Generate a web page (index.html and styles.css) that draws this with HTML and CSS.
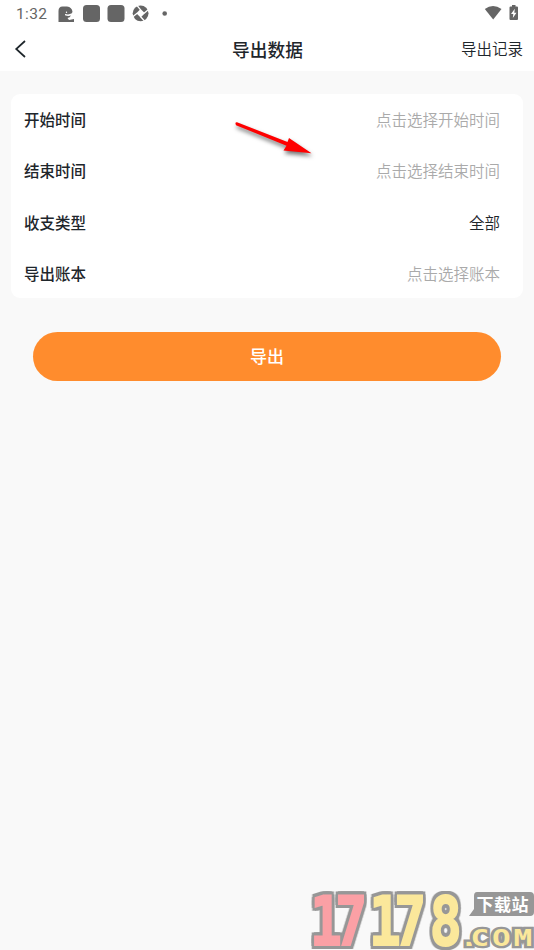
FILE: index.html
```html
<!DOCTYPE html>
<html lang="zh-CN">
<head>
<meta charset="utf-8">
<title>导出数据</title>
<link rel="stylesheet" href="styles.css">
</head>
<body>
<div class="screen">
  <header class="top">
    <div class="status">
      <span class="clock">1:32</span>
      <svg class="apps" width="112" height="20" viewBox="57 4 112 20" fill="#656565">
        <path d="M58.500 22V11Q58.500 6.500 62.500 6.500H67Q72 7 72.500 12L71.500 13.500L68 14.500L65 14V15.200Q68 16.500 71 15.500Q70 17.500 67.500 18L69 20L74 19V22Z"/>
        <circle cx="66.500" cy="12.300" r=".7" fill="#fff"/>
        <rect x="83" y="5" width="17" height="17" rx="3.500"/>
        <rect x="107.500" y="5" width="17" height="17" rx="3.500"/>
        <circle cx="140.600" cy="13.300" r="7.900"/>
        <path d="M140.600 9L144.900 13.300L140.600 17.600L136.300 13.300Z" fill="#fff"/>
        <path d="M140.600 9.800L137 5.500M144.100 13.300L148.500 9.500M140.600 16.800L144.500 21M137.100 13.300L132.500 17" stroke="#fff" stroke-width="1.300"/>
        <circle cx="164.700" cy="13.500" r="2.300"/>
      </svg>
      <svg class="radio" width="36" height="20" viewBox="484 3 36 20" fill="#656565">
        <path d="M484.800 9Q493 3 501.500 9L493.200 19.600Z"/>
        <path d="M512 5H515.500V6.500H517Q518 6.500 518 7.500V19Q518 20 517 20H510.500Q509.500 20 509.500 19V7.500Q509.500 6.500 510.500 6.500H512Z"/>
        <path d="M514.800 8.800L511 13.900H513.300L512.800 18L516.500 12.700H514.300Z" fill="#fff"/>
      </svg>
    </div>
    <nav class="nav">
      <svg class="back" width="14" height="20" viewBox="0 0 14 20"><path d="M11 2L2.200 10L11 18" fill="none" stroke="#1e262b" stroke-width="1.700"/></svg>
      <h1 class="title">导出数据</h1>
      <span class="records">导出记录</span>
    </nav>
  </header>
  <main class="content">
    <section class="card">
      <div class="row"><span class="label">开始时间</span><span class="hint">点击选择开始时间</span></div>
      <div class="row"><span class="label">结束时间</span><span class="hint">点击选择结束时间</span></div>
      <div class="row"><span class="label">收支类型</span><span class="value">全部</span></div>
      <div class="row"><span class="label">导出账本</span><span class="hint">点击选择账本</span></div>
    </section>
    <button class="submit">导出</button>
  </main>
  <svg class="arrow" width="100" height="60" viewBox="225 110 100 60">
    <path d="M237 122.200L287.500 142L289 138L311.500 153.300L283.500 150.500L286.500 145.800L236 125.300Q234.500 122 237 122.200Z" fill="#fe0000"/>
  </svg>
  <svg class="mark" width="226" height="64" viewBox="308 886 226 64">
    <g class="digits" transform="translate(310 945) scale(.78 1)">
      <text class="pink" x="0 32.500" y="0">17</text>
      <text class="yellow" x="75.500 108 153.500" y="0">178</text>
    </g>
    <path d="M477 892H530Q534 892 534 896V912Q534 916 530 916H469L474 909V896Q474 892 477 892Z" fill="#979797"/>
    <text class="site" x="476.500" y="911" textLength="52">下载站</text>
    <g class="domain" transform="translate(463 946) scale(1.350 1)">
      <text x="-2.500 5.500 21.500 37.500" y="0">.COM</text>
    </g>
  </svg>
</div>
</body>
</html>
```
FILE: styles.css
```css
* { box-sizing: border-box; }
body {
  margin: 0;
  background: #f9f9f9;
  color: #1e262b;
  font-family: "Noto Sans CJK SC", sans-serif;
  font-size: 15.5px;
}
.screen { position: relative; height: 950px; overflow: hidden; }
.top { height: 71px; background: #fff; }
.status { display: flex; height: 27px; padding: 3px 14px 0 16px; }
.clock {
  width: 41px;
  color: #656565;
  font: 15.5px/22px Roboto, sans-serif;
  letter-spacing: .35px;
}
.apps { margin-top: 1px; }
.radio { margin-left: auto; }
.nav {
  display: grid;
  grid-template-columns: 1fr auto 1fr;
  align-items: center;
  height: 44px;
  padding: 0 11px 0 12px;
}
.back { margin-left: 2px; }
.title {
  margin: 0;
  font-size: 17.7px;
  font-weight: 500;
}
.records { justify-self: end; padding-bottom: 2px; font-weight: 350; }
.content { padding: 23px 11px 0; }
.card { height: 204px; padding: 0 23px 0 13px; border-radius: 9px; background: #fff; }
.row { display: flex; align-items: center; justify-content: space-between; height: 51.4px; padding-bottom: 1.3px; }
.label { font-weight: 500; }
.value { font-weight: 350; }
.hint { color: #aaa; font-weight: 350; }
.submit {
  display: block;
  width: 468px;
  height: 49px;
  margin: 34px 0 0 22px;
  padding: 0 0 2px;
  border: 0;
  border-radius: 25px;
  background: #ff8c2d;
  color: #fff;
  font: 500 17px "Noto Sans CJK SC", sans-serif;
}
.arrow {
  position: absolute;
  left: 225px;
  top: 110px;
  filter: drop-shadow(1px 3px 2px rgba(0, 0, 0, .55));
}
.mark { position: absolute; right: 0; bottom: 0; }
.digits {
  font: bold 68px "DejaVu Sans Mono", monospace;
  stroke-width: 2px;
}
.digits text {
  filter: drop-shadow(3px 0 0 #979797) drop-shadow(-3px 0 0 #979797) drop-shadow(0 3px 0 #979797) drop-shadow(0 -3px 0 #979797);
}
.pink { fill: #fba0a5; stroke: #fba0a5; }
.yellow { fill: #fbe89b; stroke: #fbe89b; }
.site { fill: #fff; font: bold 17px "Noto Sans CJK SC", sans-serif; }
.domain {
  fill: #fbe89b;
  stroke: #979797;
  stroke-width: 4.5px;
  paint-order: stroke;
  font: bold 23px "DejaVu Sans Mono", monospace;
}
```
